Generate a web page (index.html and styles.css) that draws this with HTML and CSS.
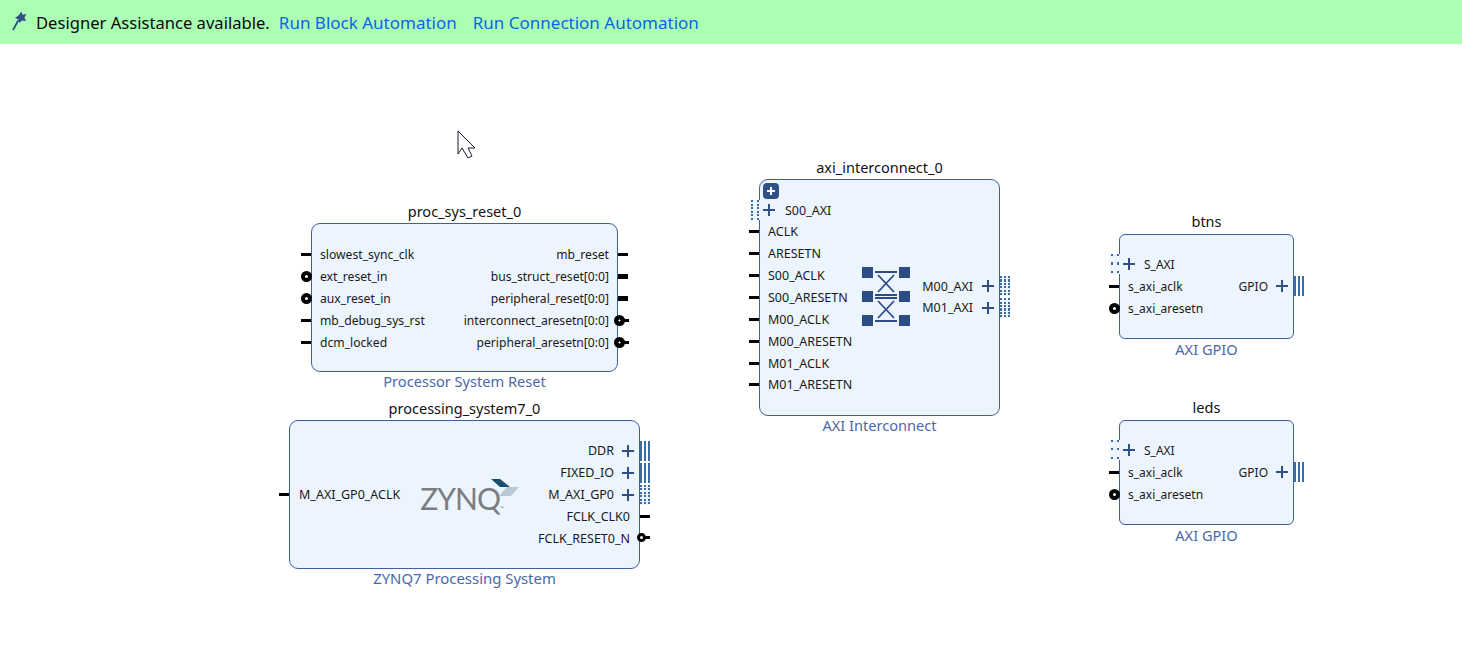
FILE: index.html
```html
<!DOCTYPE html>
<html lang="en">
<head>
  <meta charset="UTF-8">
  <meta name="viewport" content="width=device-width, initial-scale=1.0">
  <title>Block Design</title>
  <link rel="stylesheet" href="styles.css">
</head>
<body>
  <div class="banner">
    <svg class="wand" width="16" height="20" viewBox="0 0 16 20">
      <path d="M10.500 .5l1 3.300 4-.8-2 3.500 1.500 3.500-4-.5-2.500 2.500-1-3.500-3.500-1.500 3.500-2.500z" fill="#2f4f86"/>
      <path d="M7.500 9l-5.500 10" stroke="#2f4f86" stroke-width="1.800" fill="none"/>
    </svg>
    <span class="banner-text">Designer Assistance available.</span>
    <a href="#" class="banner-link">Run Block Automation</a>
    <a href="#" class="banner-link">Run Connection Automation</a>
  </div>

  <div class="canvas">
    <svg class="cursor" width="20" height="30" viewBox="0 0 20 30">
      <path d="M1 1v23l4-6 6 10 4-2-4-8h7z" fill="#fff" stroke="#1a1a2a" stroke-width="1"/>
    </svg>

    <div class="node node-reset">
      <div class="node-title">proc_sys_reset_0</div>
      <div class="box">
        <div class="col">
          <div class="row"><i class="stub clk"></i>slowest_sync_clk</div>
          <div class="row"><i class="stub neg"></i>ext_reset_in</div>
          <div class="row"><i class="stub neg"></i>aux_reset_in</div>
          <div class="row"><i class="stub clk"></i>mb_debug_sys_rst</div>
          <div class="row"><i class="stub clk"></i>dcm_locked</div>
        </div>
        <div class="col col-right">
          <div class="row">mb_reset<i class="stub clk"></i></div>
          <div class="row">bus_struct_reset[0:0]<i class="stub bus"></i></div>
          <div class="row">peripheral_reset[0:0]<i class="stub bus"></i></div>
          <div class="row">interconnect_aresetn[0:0]<i class="stub neg-out"></i></div>
          <div class="row">peripheral_aresetn[0:0]<i class="stub neg-out"></i></div>
        </div>
      </div>
      <div class="node-type">Processor System Reset</div>
    </div>

    <div class="node node-zynq">
      <div class="node-title">processing_system7_0</div>
      <div class="box">
        <div class="col col-zynq-left">
          <div class="row"><i class="stub clk"></i>M_AXI_GP0_ACLK</div>
        </div>
        <div class="zynq-logo">
          <span class="zynq-word">ZYNQ<small>™</small></span>
          <svg class="zynq-mark" width="32" height="18" viewBox="0 0 32 18">
            <path d="M3 0h9l10 8h-10z" fill="#15506f"/>
            <path d="M19 8h12l-8 9h-12z" fill="#b9c9d3"/>
          </svg>
        </div>
        <div class="col col-right">
          <div class="row has-plus">DDR<i class="plus"></i><i class="stub solid"></i></div>
          <div class="row has-plus">FIXED_IO<i class="plus"></i><i class="stub solid"></i></div>
          <div class="row has-plus">M_AXI_GP0<i class="plus"></i><i class="stub dotted"></i></div>
          <div class="row row-wide">FCLK_CLK0<i class="stub clk"></i></div>
          <div class="row row-wide">FCLK_RESET0_N<i class="stub neg-far"></i></div>
        </div>
      </div>
      <div class="node-type">ZYNQ7 Processing System</div>
    </div>

    <div class="node node-inter">
      <div class="node-title">axi_interconnect_0</div>
      <div class="box">
        <span class="expander"></span>
        <div class="col">
          <div class="row has-plus"><i class="stub dotted"></i><i class="plus"></i>S00_AXI</div>
          <div class="row"><i class="stub clk"></i>ACLK</div>
          <div class="row"><i class="stub clk"></i>ARESETN</div>
          <div class="row"><i class="stub clk"></i>S00_ACLK</div>
          <div class="row"><i class="stub clk"></i>S00_ARESETN</div>
          <div class="row"><i class="stub clk"></i>M00_ACLK</div>
          <div class="row"><i class="stub clk"></i>M00_ARESETN</div>
          <div class="row"><i class="stub clk"></i>M01_ACLK</div>
          <div class="row"><i class="stub clk"></i>M01_ARESETN</div>
        </div>
        <svg class="xbar" width="48" height="60" viewBox="0 0 48 60">
          <g fill="#2b4c86">
            <rect x="0" y="1" width="11" height="11"/>
            <rect x="37" y="1" width="11" height="11"/>
            <rect x="0" y="25" width="11" height="11"/>
            <rect x="37" y="25" width="11" height="11"/>
            <rect x="0" y="49" width="11" height="11"/>
            <rect x="37" y="49" width="11" height="11"/>
          </g>
          <path d="M13 6h22M13 29h22M13 32h22M13 55h22M16 9l16 17M32 9l-16 17M16 35l16 17M32 35l-16 17" stroke="#2b4c86" stroke-width="1.800" fill="none"/>
        </svg>
        <div class="col col-right col-inter-right">
          <div class="row has-plus">M00_AXI<i class="plus"></i><i class="stub dotted"></i></div>
          <div class="row has-plus">M01_AXI<i class="plus"></i><i class="stub dotted"></i></div>
        </div>
      </div>
      <div class="node-type">AXI Interconnect</div>
    </div>

    <div class="node node-gpio node-btns">
      <div class="node-title">btns</div>
      <div class="box">
        <div class="col">
          <div class="row has-plus"><i class="stub dotted"></i><i class="plus"></i>S_AXI</div>
          <div class="row"><i class="stub clk"></i>s_axi_aclk</div>
          <div class="row"><i class="stub neg"></i>s_axi_aresetn</div>
        </div>
        <div class="col col-right col-gpio-right">
          <div class="row has-plus">GPIO<i class="plus"></i><i class="stub solid"></i></div>
        </div>
      </div>
      <div class="node-type">AXI GPIO</div>
    </div>

    <div class="node node-gpio node-leds">
      <div class="node-title">leds</div>
      <div class="box">
        <div class="col">
          <div class="row has-plus"><i class="stub dotted"></i><i class="plus"></i>S_AXI</div>
          <div class="row"><i class="stub clk"></i>s_axi_aclk</div>
          <div class="row"><i class="stub neg"></i>s_axi_aresetn</div>
        </div>
        <div class="col col-right col-gpio-right">
          <div class="row has-plus">GPIO<i class="plus"></i><i class="stub solid"></i></div>
        </div>
      </div>
      <div class="node-type">AXI GPIO</div>
    </div>
  </div>
</body>
</html>
```

FILE: styles.css
```css
body {
  font-family: "Noto Sans", "Open Sans", sans-serif;
  margin: 0;
  padding: 0;
  background-color: #fff;
  color: #111;
  height: 647px;
  overflow: hidden;
  display: flex;
  flex-direction: column;
}

/* top banner */
.banner {
  height: 44px;
  background-color: #abffb3;
  display: flex;
  align-items: center;
  padding-left: 11px;
  font-size: 17px;
  flex-shrink: 0;
}
.wand {
  margin-right: 9px;
  margin-top: -2px;
}
.banner-text {
  font-size: 16.600px;
  margin-right: 9px;
  color: #0a0a0a;
}
.banner-link {
  color: #0b63ea;
  text-decoration: none;
  margin-right: 16px;
}

/* diagram canvas */
.canvas {
  position: relative;
  flex: 1;
}
.cursor {
  position: absolute;
  left: 457px;
  top: 86px;
}
.node {
  position: absolute;
  display: flex;
  flex-direction: column;
  align-items: stretch;
}
.node-reset { left: 311px; top: 157px; width: 307px; }
.node-zynq { left: 289px; top: 354px; width: 351px; }
.node-inter { left: 759px; top: 113px; width: 241px; }
.node-gpio { width: 175px; }
.node-btns { left: 1119px; top: 168px; }
.node-leds { left: 1119px; top: 354px; }

.node-title {
  height: 22px;
  line-height: 20px;
  font-size: 14.500px;
  text-align: center;
  color: #111;
}
.node-type {
  height: 20px;
  line-height: 18px;
  font-size: 14.600px;
  text-align: center;
  color: #4a69a8;
}
.node-zynq .node-type { font-size: 14.900px; }
.node-gpio .node-title { line-height: 18px; }
.node-gpio .node-type { line-height: 20px; }
.box {
  position: relative;
  box-sizing: border-box;
  border: 1px solid #3f5f9f;
  border-radius: 9px;
  background-color: #ecf4fd;
  padding-top: 19px;
  display: flex;
  align-items: flex-start;
}
.node-reset .box { height: 149px; }
.node-zynq .box { height: 149px; }
.node-inter .box { height: 237px; padding-top: 19.200px; }
.node-gpio .box { height: 105px; padding-top: 18px; border-radius: 6px; }

/* pin columns */
.col {
  display: flex;
  flex-direction: column;
}
.col-right {
  margin-left: auto;
  align-items: stretch;
}
.col-zynq-left { margin-top: 44px; }
.col-inter-right { margin-top: 76px; }
.col-gpio-right { margin-top: 22px; }

.row {
  position: relative;
  display: flex;
  align-items: center;
  height: 22px;
  font-size: 12.150px;
  white-space: nowrap;
  padding-left: 8px;
  color: #1a1a1a;
}
.node-zynq .row,
.node-inter .row { height: 21.850px; font-size: 12.500px; }
.node-gpio .row { font-size: 12px; }
.col-right .row {
  padding-left: 0;
  padding-right: 8px;
  justify-content: flex-end;
}
.col-right .row.has-plus { padding-right: 5px; }
.col-right .row.row-wide { padding-right: 9px; }
.col .row.has-plus { padding-left: 3px; }
.node-inter .col .row.has-plus .plus { margin-right: 10px; }
.node-inter .col-right .row.has-plus .plus { margin-right: 0; margin-left: 9px; }
.node-zynq .col-zynq-left .row { padding-left: 9px; }

.plus {
  display: block;
  width: 12px;
  height: 12px;
  margin-right: 9px;
  background:
    linear-gradient(#2f4f86, #2f4f86) center / 12px 2px no-repeat,
    linear-gradient(#2f4f86, #2f4f86) center / 2px 12px no-repeat;
}
.col-right .plus {
  margin-right: 0;
  margin-left: 8px;
}

/* pin stubs sitting on the block edge */
.stub {
  position: absolute;
  top: 50%;
  display: block;
}
.clk {
  left: -11px;
  width: 10px;
  height: 3px;
  margin-top: -1.500px;
  background-color: #000;
}
.col-right .clk { left: auto; right: -11px; }
.bus {
  right: -11px;
  width: 10px;
  height: 5px;
  margin-top: -2.500px;
  background-color: #000;
}
.neg {
  left: -11px;
  width: 3px;
  height: 3px;
  margin-top: -5px;
  border: 4px solid #000;
  border-radius: 50%;
  background-color: #fff;
}
.neg-out {
  right: -8px;
  width: 11px;
  height: 11px;
  margin-top: -5.500px;
  border-radius: 50%;
  background: radial-gradient(circle, #fff 0 .8px, #000 1.300px);
}
.neg-out::after {
  content: "";
  position: absolute;
  left: 10px;
  top: 4px;
  width: 5px;
  height: 3px;
  background-color: #000;
}
.neg-far {
  right: -7px;
  width: 3px;
  height: 3px;
  margin-top: -5px;
  border: 3px solid #000;
  border-radius: 50%;
  background-color: #fff;
}
.neg-far::after {
  content: "";
  position: absolute;
  left: 5px;
  top: 0;
  width: 5px;
  height: 3px;
  background-color: #000;
}
.dotted,
.solid {
  width: 10px;
  height: 20px;
  margin-top: -10px;
}
.col .dotted { left: -10px; }
.col-right .dotted,
.col-right .solid { left: auto; right: -11px; }
.dotted {
  background:
    repeating-linear-gradient(90deg, transparent 0 2px, #edf4fc 2px 4px),
    repeating-linear-gradient(180deg, #3c6ba6 0 2px, #edf4fc 2px 3.500px);
}
.node-inter .col:not(.col-right) .dotted {
  background:
    repeating-linear-gradient(90deg, #edf4fc 0 1px, transparent 1px 3px, #edf4fc 3px 6px),
    repeating-linear-gradient(180deg, #3c6ba6 0 2px, #edf4fc 2px 3.500px);
}
.node-gpio .col:not(.col-right) .dotted {
  background:
    repeating-linear-gradient(90deg, #edf4fc 0 1px, transparent 1px 3px, #edf4fc 3px 6px),
    repeating-linear-gradient(180deg, #3c6ba6 0 2px, #edf4fc 2px 8.500px);
}
.solid {
  background: repeating-linear-gradient(90deg, #3c6ba6 0 2.400px, #fff 2.400px 3.800px);
}

/* block contents */
.expander {
  position: absolute;
  left: 3px;
  top: 3px;
  width: 16px;
  height: 16px;
  border-radius: 4px;
  background:
    linear-gradient(#fff, #fff) center / 8px 2px no-repeat,
    linear-gradient(#fff, #fff) center / 2px 8px no-repeat,
    #2f4f86;
}
.xbar {
  flex-shrink: 0;
  margin-left: 9.500px;
  margin-top: 66.800px;
}
.zynq-logo {
  position: relative;
  margin-left: 20px;
  margin-top: 38px;
  width: 100px;
  height: 40px;
  flex-shrink: 0;
}
.zynq-word {
  position: absolute;
  left: 0;
  top: 0;
  font-family: "Lato", "Liberation Sans", sans-serif;
  font-weight: 400;
  font-size: 30px;
  letter-spacing: -1px;
  line-height: 40px;
  color: #7b7e81;
}
.zynq-word small {
  font-size: 5px;
  letter-spacing: 0;
}
.zynq-mark {
  position: absolute;
  left: 68px;
  top: 1px;
}
```
